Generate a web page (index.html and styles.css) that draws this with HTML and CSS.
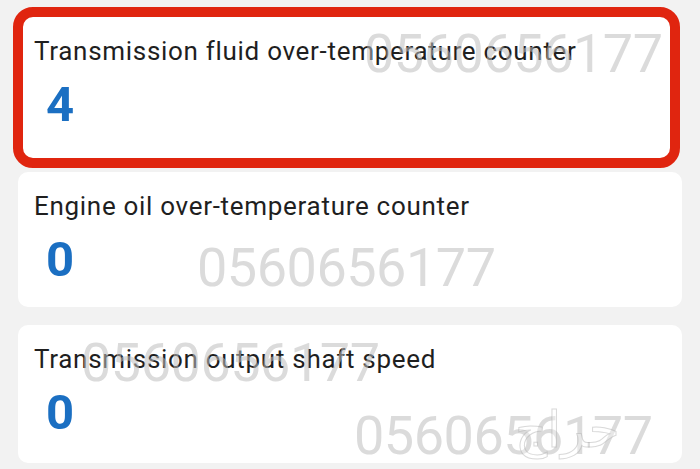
FILE: index.html
```html
<!DOCTYPE html>
<html>
<head>
<meta charset="utf-8">
<link rel="stylesheet" href="styles.css">
</head>
<body>
<div class="page">
  <div class="list">
    <div class="card card-highlight">
      <div class="title">Transmission fluid over-temperature counter</div>
      <div class="value">4</div>
    </div>
    <div class="card">
      <div class="title">Engine oil over-temperature counter</div>
      <div class="value">0</div>
    </div>
    <div class="card card-last">
      <div class="title">Transmission output shaft speed</div>
      <div class="value">0</div>
    </div>
  </div>
  <div class="wm wm1">0560656177</div>
  <div class="wm wm2">0560656177</div>
  <div class="wm wm3">0560656177</div>
  <div class="wm wm4">0560656177</div>
  <div class="logo">حراج</div>
</div>
</body>
</html>
```

FILE: styles.css
```css
html, body {
  margin: 0;
  padding: 0;
  background: #f2f2f2;
}
.page {
  position: relative;
  width: 700px;
  height: 469px;
  overflow: hidden;
  font-family: Roboto, "Liberation Sans", Arial, sans-serif;
}
.list {
  display: flex;
  flex-direction: column;
  gap: 18px;
  padding: 7px 18px 0 18px;
}
.card {
  background: #ffffff;
  border-radius: 10px;
  padding: 20px 16px 19px 16px;
  height: 96px;
}
.card-highlight {
  margin: 0 2px -14px -5px;
  border: 10px solid #e0250f;
  border-radius: 20px;
  padding: 20px 11px 11px 11px;
  height: 110px;
}
.card-last {
  height: 99px;
}
.title {
  font-size: 26px;
  line-height: 28px;
  font-weight: 400;
  color: #1f1f1f;
  letter-spacing: 0.7px;
  white-space: nowrap;
}
.value {
  margin-top: 12px;
  padding-left: 12px;
  font-size: 49px;
  line-height: 56px;
  font-weight: 700;
  color: #1b6fc2;
}
.wm {
  position: absolute;
  font-family: Roboto, "Liberation Sans", Arial, sans-serif;
  font-size: 54px;
  line-height: 54px;
  color: rgba(190, 190, 190, 0.55);
  letter-spacing: -0.5px;
  pointer-events: none;
}
.wm1 { left: 364px; top: 27px; }
.wm2 { left: 197px; top: 241px; }
.wm3 { left: 81px; top: 336px; }
.wm4 { left: 354px; top: 409px; }
.logo {
  position: absolute;
  left: 515px;
  top: 402px;
  font-family: "DejaVu Sans", sans-serif;
  font-size: 50px;
  line-height: 56px;
  color: rgba(255, 255, 255, 0.35);
  -webkit-text-stroke: 1px rgba(170, 170, 170, 0.45);
  pointer-events: none;
}
```
